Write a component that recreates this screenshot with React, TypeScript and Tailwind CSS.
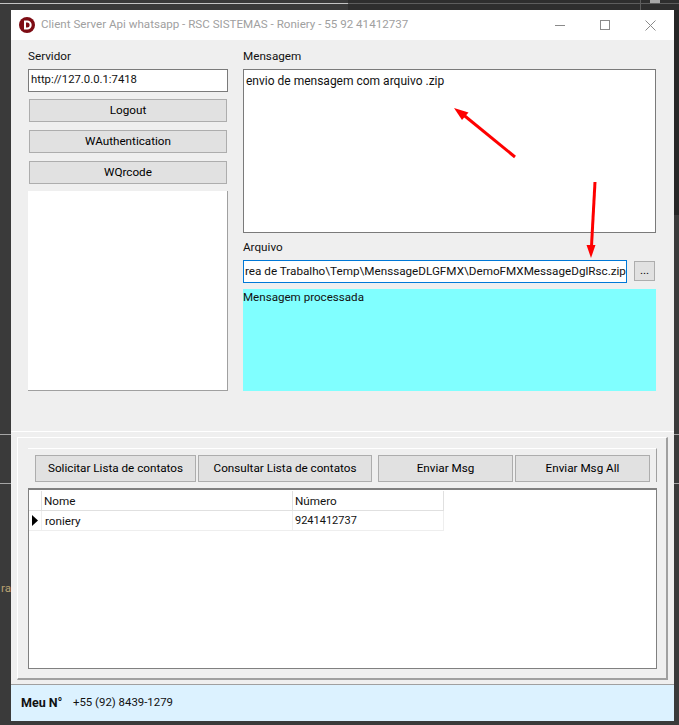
import React from "react";

function GrayButton({ label, className }: { label: string; className: string }) {
  return (
    <div className={`flex items-center justify-center border border-[#adadad] bg-[#e1e1e1] text-[#000] ${className}`}>
      {label}
    </div>
  );
}

function Label({ text }: { text: string }) {
  return <div className="h-[17px] leading-[17px]">{text}</div>;
}

export default function App() {
  return (
    <div className="relative h-[725px] w-[679px] overflow-hidden bg-[#3a3a3a] pl-[11px] pt-[10px] font-['Roboto',sans-serif] text-[11.7px] text-[#111]">
      {/* desktop behind the window */}
      <div className="absolute right-0 top-0 h-[215px] w-[5px] bg-[#262626]" />
      <div className="absolute right-0 top-0 h-[10px] w-[331px] bg-[#2e2e2e]" />
      <div className="absolute left-0 top-[3px] h-px w-[348px] bg-[#c4c4c4]" />
      <div className="absolute right-0 top-[3px] h-px w-[331px] bg-[#5e5e5e]" />
      <div className="absolute left-[640px] top-0 h-[10px] w-px bg-[#5e5e5e]" />
      <div className="absolute left-[650px] top-0 h-[3px] w-[10px] bg-[#a8a8a8]" />
      <div className="absolute left-0 top-[434px] h-px w-[11px] bg-[#a5a5a5]" />
      <div className="absolute left-0 top-[483px] h-px w-[11px] bg-[#a5a5a5]" />
      <div className="absolute right-0 top-[434px] h-px w-[5px] bg-[#a5a5a5]" />
      <div className="absolute right-0 top-[483px] h-px w-[5px] bg-[#a5a5a5]" />
      <div className="absolute left-0 top-[580px] w-[11px] overflow-hidden text-right leading-[16px] text-[#b8a070]">ra</div>

      <div className="relative flex h-[711px] w-[663px] flex-col bg-[#efefef]">
        {/* title bar */}
        <div className="flex h-[30px] shrink-0 items-center bg-white pl-[8px]">
          <svg width="16" height="16" viewBox="0 0 16 16" className="shrink-0">
            <circle cx="8" cy="8" r="8" fill="#7d0c14" />
            <path d="M5 3.500h3.200a4.500 4.500 0 0 1 0 9H5z" fill="#fff" />
            <path d="M7 5.500h1.100a2.500 2.500 0 0 1 0 5H7z" fill="#7d0c14" />
          </svg>
          <span className="ml-[6px] text-[11.6px] text-[#a0a0a0]">Client Server Api whatsapp - RSC SISTEMAS - Roniery - 55 92 41412737</span>
          <div className="ml-auto flex items-center">
            <div className="mr-[35px] h-px w-[10px] bg-[#8a8a8a]" />
            <div className="mr-[35px] h-[10px] w-[10px] border border-[#8a8a8a]" />
            <svg width="11" height="11" viewBox="0 0 11 11" className="mr-[18px]">
              <path d="M.5.5l10 10M10.500.5l-10 10" stroke="#8a8a8a" fill="none" />
            </svg>
          </div>
        </div>

        {/* upper form */}
        <div className="flex h-[391px] shrink-0 gap-[15px] pl-[17px] pt-[8px]">
          <div className="flex w-[200px] flex-col">
            <Label text="Servidor" />
            <div className="mt-[4px] flex h-[23px] items-center border border-[#7a7a7a] bg-white pl-[2px] text-[11.3px]">http://127.0.0.1:7418</div>
            <div className="mx-px mt-[7px] flex flex-col gap-[8px]">
              <GrayButton label="Logout" className="h-[23px]" />
              <GrayButton label="WAuthentication" className="h-[23px]" />
              <GrayButton label="WQrcode" className="h-[23px]" />
            </div>
            <div className="mt-[7px] h-[200px] border-b border-r border-[#a0a0a0] bg-white" />
          </div>

          <div className="flex w-[413px] flex-col">
            <Label text="Mensagem" />
            <div className="mt-[4px] h-[164px] border border-[#7a7a7a] bg-white px-[2px] pt-[2px] text-[12px]">envio de mensagem com arquivo .zip</div>
            <div className="mt-[6px]"><Label text="Arquivo" /></div>
            <div className="mt-[4px] flex items-start">
              <div className="flex h-[23px] w-[384px] items-center overflow-hidden border border-[#0078d7] bg-white pl-[1px]">
                <span className="whitespace-nowrap">rea de Trabalho\Temp\MenssageDLGFMX\DemoFMXMessageDglRsc.zip</span>
              </div>
              <GrayButton label="..." className="ml-[7px] mt-px h-[20px] w-[21px]" />
            </div>
            <div className="mt-[6px] h-[102px] bg-[#80ffff] text-[11.6px] leading-[16px]">Mensagem processada</div>
          </div>
        </div>

        {/* lower panel */}
        <div className="flex min-h-0 flex-1 flex-col border-t border-white px-[6px] pt-[5px]">
          <div className="flex h-[243px] shrink-0 flex-col border border-b-2 border-r-2 border-white border-b-[#a0a0a0] border-r-[#a0a0a0] pl-[10px] pr-[9px] pt-[10px]">
            <div className="flex h-[221px] flex-col">
              <div className="border-r border-t border-white border-r-[#a0a0a0] pl-[7px] pt-[6px] pr-[5px]">
                <div className="flex h-[27px]">
                  <GrayButton label="Solicitar Lista de contatos" className="w-[161px]" />
                  <GrayButton label="Consultar Lista de contatos" className="ml-[2px] w-[174px]" />
                  <GrayButton label="Enviar Msg" className="ml-[6px] w-[135px]" />
                  <GrayButton label="Enviar Msg All" className="ml-[2px] w-[135px]" />
                </div>
              </div>
              <div className="mt-[6px] flex min-h-0 flex-1 flex-col border border-t-2 border-[#808080] bg-white">
                <div className="flex h-[21px] w-[415px] pt-px">
                  <div className="w-[13px] border-b border-r border-[#e0e0e0]" />
                  <div className="w-[251px] border-b border-r border-[#e0e0e0] pl-[2px] leading-[21px]">Nome</div>
                  <div className="w-[151px] border-b border-r border-[#e0e0e0] pl-[2px] leading-[21px]">Número</div>
                </div>
                <div className="flex h-[20px] w-[415px]">
                  <div className="flex w-[13px] items-center justify-center border-b border-r border-[#eeeeee]">
                    <svg width="6" height="11" viewBox="0 0 6 11"><path d="M0 0l6 5.500-6 5.500z" fill="#000" /></svg>
                  </div>
                  <div className="w-[251px] border-b border-r border-[#eeeeee] pl-[3px] leading-[20px]">roniery</div>
                  <div className="w-[151px] border-b border-r border-[#eeeeee] pl-[2px] text-[11px] leading-[20px]">9241412737</div>
                </div>
              </div>
            </div>
          </div>
        </div>

        {/* status bar */}
        <div className="flex h-[37px] shrink-0 items-center border-t border-[#a0a0a0] bg-[#dcf2ff] pl-[10px]">
          <span className="w-[52px] text-[12.5px] font-bold">Meu N°</span>
          <span className="text-[11.4px]">+55 (92) 8439-1279</span>
        </div>
      </div>

      {/* red arrows drawn on the screenshot */}
      <svg width="679" height="725" className="pointer-events-none absolute left-0 top-0">
        <path d="M515 157L463 114.500" stroke="#fe0000" strokeWidth="3" fill="none" />
        <path d="M454 108l14.500 4.500-6.500 7.500z" fill="#fe0000" />
        <path d="M595 182l-3.500 64" stroke="#fe0000" strokeWidth="3" fill="none" />
        <path d="M591 258l-4.500-13h9z" fill="#fe0000" />
      </svg>
    </div>
  );
}
